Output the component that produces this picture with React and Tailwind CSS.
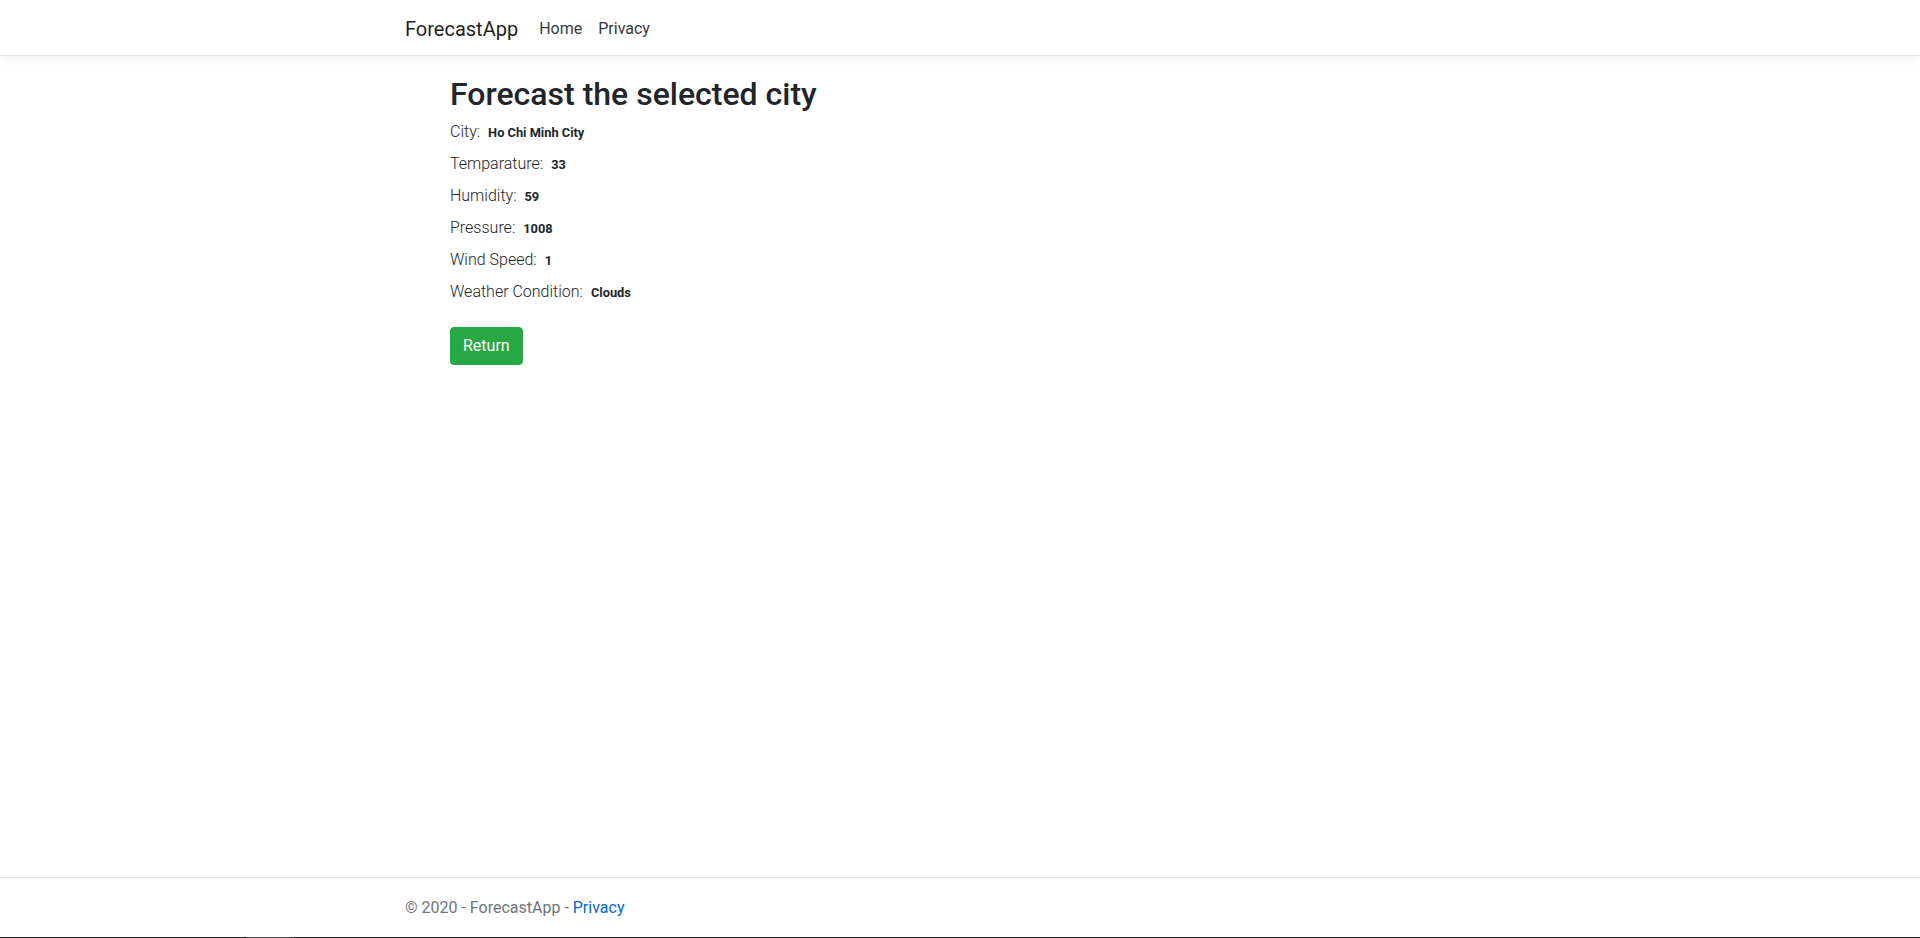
const rows = [
  { label: "City:", value: "Ho Chi Minh City" },
  { label: "Temparature:", value: "33" },
  { label: "Humidity:", value: "59" },
  { label: "Pressure:", value: "1008" },
  { label: "Wind Speed:", value: "1" },
  { label: "Weather Condition:", value: "Clouds" },
];

function App() {
  return (
    <div className="h-[938px] flex flex-col bg-white text-[#212529] font-['Roboto','Liberation_Sans',sans-serif] overflow-hidden">
      {/* Navbar */}
      <header className="h-[56px] shrink-0 bg-white border-b border-[#dee2e6] shadow-[0_4px_12px_rgba(0,0,0,0.05)]">
        <div className="w-[1140px] mx-auto px-[15px] h-full flex items-center pt-[3px]">
          <a className="text-[20px] leading-[30px] text-[rgba(0,0,0,0.9)] mr-[13px]">ForecastApp</a>
          <nav className="flex">
            <a className="px-2 text-[16px] leading-6 text-[#343a40]">Home</a>
            <a className="px-2 text-[16px] leading-6 text-[#343a40]">Privacy</a>
          </nav>
        </div>
      </header>

      {/* Main */}
      <main className="flex-1 pt-[19px]">
        <div className="w-[1140px] mx-auto pl-[60px] pr-[15px]">
          <h2 className="text-[32px] leading-[38px] font-medium mb-[7px]">Forecast the selected city</h2>
          {rows.map((r) => (
            <div key={r.label} className="h-6 text-[16px] leading-6 mb-2 font-light">
              {r.label}
              <span className="pl-2 text-[12.8px] leading-none font-bold">{r.value}</span>
            </div>
          ))}
          <button className="mt-[15px] h-[38px] px-3 bg-[#28a745] text-white text-[16px] rounded-[4px] border border-[#28a745]">
            Return
          </button>
        </div>
      </main>

      {/* Footer */}
      <footer className="shrink-0 border-t border-[#dee2e6]">
        <div className="w-[1140px] mx-auto px-[15px] h-[59px] leading-[59px] text-[16px] text-[#6c757d] whitespace-nowrap">
          © 2020 - ForecastApp - <a className="text-[#0366d6]">Privacy</a>
        </div>
        <div className="h-px bg-[#202020] flex">
          <div className="w-[246px]" />
          <div className="w-[48px] bg-[#4a4a4a]" />
        </div>
      </footer>
    </div>
  );
}

export default App;
